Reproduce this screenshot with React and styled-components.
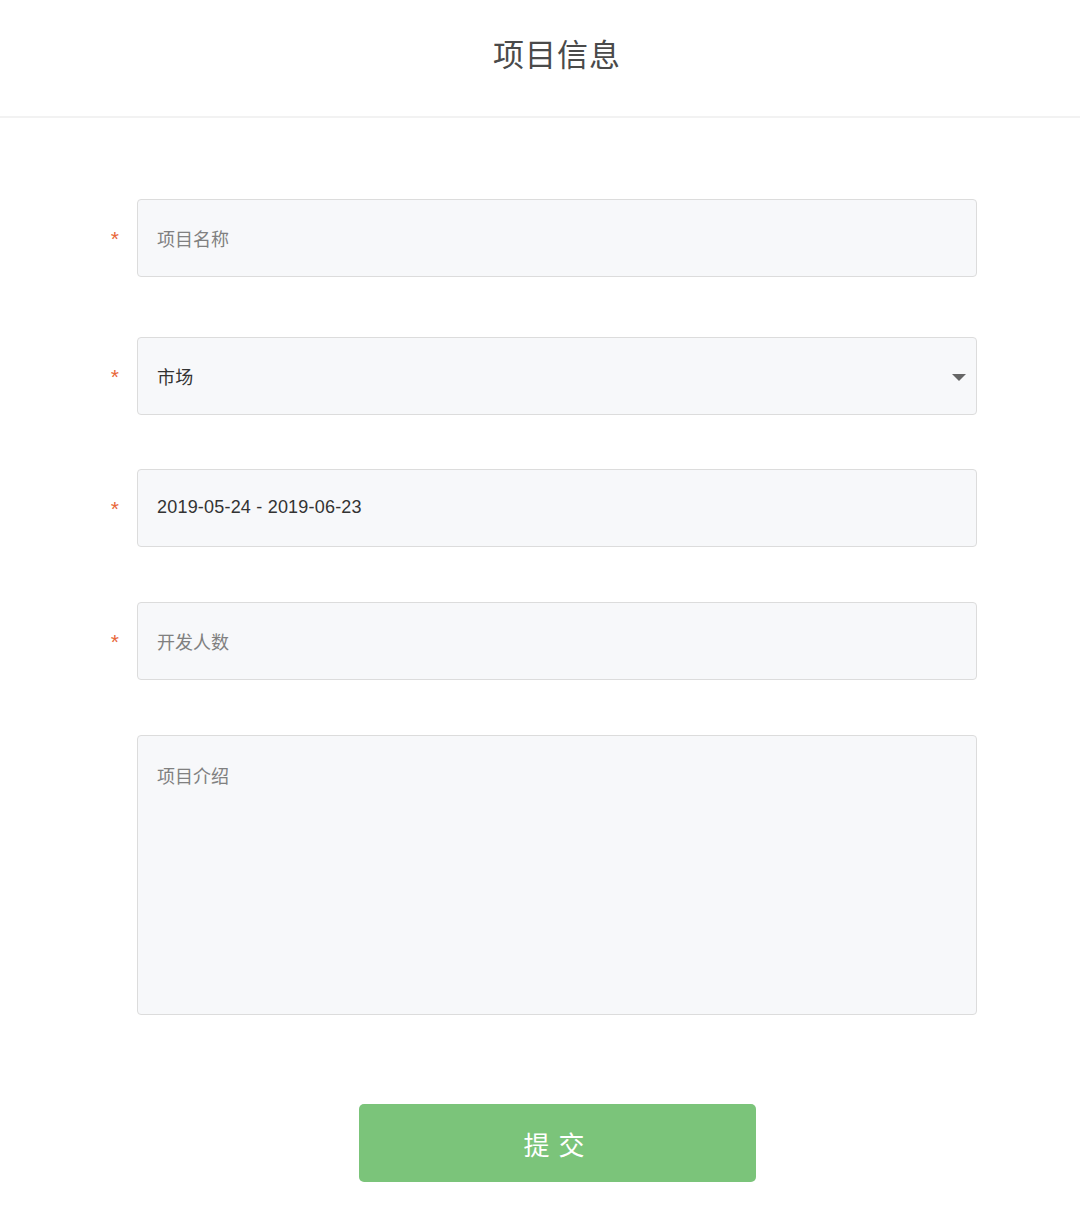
import React from 'react';
import styled, { createGlobalStyle } from 'styled-components';

const GlobalStyle = createGlobalStyle`
  body {
    margin: 0;
    background: #fff;
    font-family: "Helvetica Neue", "Liberation Sans", "Noto Sans CJK SC", sans-serif;
  }
`;

const Page = styled.div`
  width: 1080px;
  min-height: 1216px;
  background: #fff;
`;

const Header = styled.header`
  height: 118px;
  display: flex;
  align-items: center;
  justify-content: center;
  padding-left: 34px;
  box-sizing: border-box;
  border-bottom: 2px solid #f2f2f2;
`;

const Title = styled.h1`
  margin: 0 0 12px;
  font-size: 31px;
  font-weight: 400;
  color: #4a4a4a;
  letter-spacing: 1px;
  font-family: "Noto Sans CJK SC", sans-serif;
`;

const Form = styled.form`
  display: flex;
  flex-direction: column;
  padding-top: 81px;
`;

const Row = styled.div`
  display: grid;
  grid-template-columns: 137px 840px;
  align-items: center;
  margin-bottom: ${p => p.$gap}px;
`;

const Required = styled.span`
  justify-self: end;
  padding-right: 18px;
  color: #e8663a;
  font-size: 21px;
  line-height: 1;
  padding-top: 1px;
`;

const Field = styled.div`
  position: relative;
  box-sizing: border-box;
  height: ${p => p.$tall || 78}px;
  background: #f7f8fa;
  border: 1.5px solid #dcdcdc;
  border-radius: 4px;
  display: flex;
  align-items: ${p => (p.$tall ? 'flex-start' : 'center')};
  padding: ${p => (p.$tall ? '26px 19px' : '0 19px 1px')};
`;

const Text = styled.span`
  font-size: 18px;
  color: ${p => (p.$placeholder ? '#808080' : '#333')};
  font-family: "Liberation Sans", "Noto Sans CJK SC", sans-serif;
  letter-spacing: ${p => (p.$placeholder ? '0' : '0.2px')};
`;

const Caret = styled.span`
  position: absolute;
  right: 10px;
  top: 50%;
  margin-top: -2px;
  width: 0;
  height: 0;
  border-left: 7px solid transparent;
  border-right: 7px solid transparent;
  border-top: 7px solid #666;
`;

const Actions = styled.div`
  display: flex;
  justify-content: center;
  padding-left: 34px;
  padding-top: 35px;
`;

const Submit = styled.button`
  width: 397px;
  height: 78px;
  border: none;
  border-radius: 5px;
  background: #7bc47a;
  color: #fff;
  font-size: 26px;
  letter-spacing: 9px;
  padding-left: 9px;
  font-family: "Noto Sans CJK SC", sans-serif;
  cursor: pointer;
`;

const fields = [
  { key: 'name', required: true, text: '项目名称', placeholder: true, gap: 60 },
  { key: 'market', required: true, text: '市场', select: true, gap: 54 },
  { key: 'date', required: true, text: '2019-05-24 - 2019-06-23', gap: 55 },
  { key: 'people', required: true, text: '开发人数', placeholder: true, gap: 55 },
  { key: 'intro', text: '项目介绍', placeholder: true, tall: 280, gap: 54 },
];

const App = () => (
  <Page>
    <GlobalStyle />
    <Header>
      <Title>项目信息</Title>
    </Header>
    <Form onSubmit={e => e.preventDefault()}>
      {fields.map(f => (
        <Row key={f.key} $gap={f.gap}>
          {f.required ? <Required>*</Required> : <span />}
          <Field $tall={f.tall}>
            <Text $placeholder={f.placeholder}>{f.text}</Text>
            {f.select && <Caret />}
          </Field>
        </Row>
      ))}
      <Actions>
        <Submit type="submit">提交</Submit>
      </Actions>
    </Form>
  </Page>
);

export default App;
